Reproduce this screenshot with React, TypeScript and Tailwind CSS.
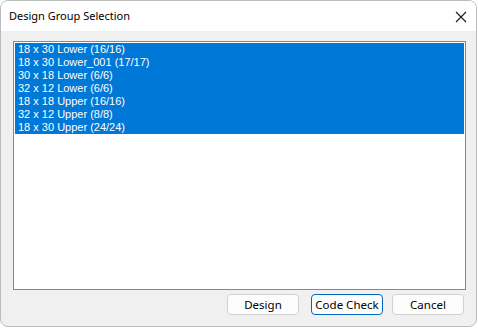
const groups = [
  '18 x 30 Lower (16/16)',
  '18 x 30 Lower_001 (17/17)',
  '30 x 18 Lower (6/6)',
  '32 x 12 Lower (6/6)',
  '18 x 18 Upper (16/16)',
  '32 x 12 Upper (8/8)',
  '18 x 30 Upper (24/24)',
]

function DialogButton({ label, focused }: { label: string; focused?: boolean }) {
  return (
    <button
      type="button"
      className={`h-[21px] w-[72px] rounded-[4px] bg-[#fdfdfd] text-[11.5px] leading-none text-black ${
        focused ? 'border border-[#0067c0]' : 'border border-[#d0d0d0]'
      }`}
    >
      {label}
    </button>
  )
}

export default function App() {
  return (
    <div className="h-[328px] w-[478px] bg-white" style={{ fontFamily: '"Segoe UI", "Noto Sans", sans-serif' }}>
      <div className="flex h-[327px] w-[477px] flex-col overflow-hidden rounded-lg border border-[#bcbcbc] bg-[#f0f0f0]">
        <div className="flex h-[30px] shrink-0 items-center justify-between bg-white pl-[8px] pr-[9px]">
          <span className="text-[11px] text-black">Design Group Selection</span>
          <svg width="12" height="12" viewBox="0 0 12 12" className="mt-[1px]">
            <path d="M1 1 L11 11 M11 1 L1 11" stroke="#1a1a1a" strokeWidth="1.1" fill="none" />
          </svg>
        </div>
        <div className="flex flex-1 flex-col pl-[12px] pr-[10px] pt-[10px]">
          <div className="h-[249px] border border-[#828790] bg-white p-[1px]">
            {groups.map((g) => (
              <div
                key={g}
                className="h-[13px] bg-[#0078d7] pl-[3px] text-[11px] leading-[13px] text-white"
                style={{ fontFamily: '"Liberation Sans", Arial, sans-serif' }}
              >
                {g}
              </div>
            ))}
          </div>
          <div className="mt-[4px] flex justify-end gap-[12px] pr-[2px]">
            <DialogButton label="Design" />
            <div className="flex gap-[9px]">
              <DialogButton label="Code Check" focused />
              <DialogButton label="Cancel" />
            </div>
          </div>
        </div>
      </div>
    </div>
  )
}
